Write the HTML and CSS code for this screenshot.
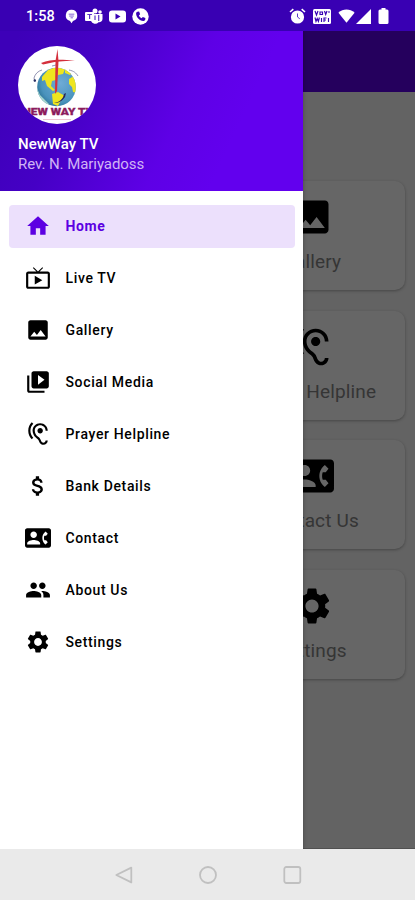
FILE: index.html
```html
<!DOCTYPE html>
<html lang="en">
<head>
<meta charset="utf-8">
<title>NewWay TV</title>
<link rel="stylesheet" href="styles.css">
</head>
<body>
<svg class="sprite" width="0" height="0" aria-hidden="true">
  <symbol id="home" viewBox="0 0 24 24"><path d="M10 20v-6h4v6h5v-8h3L12 3 2 12h3v8z"/></symbol>
  <symbol id="live" viewBox="0 0 24 24"><path d="M21 6h-7.59l3.290-3.290L16 2l-4 4-4-4-.71.71L10.590 6H3c-1.100 0-2 .89-2 2v12c0 1.100.9 2 2 2h18c1.100 0 2-.9 2-2V8c0-1.110-.9-2-2-2zm0 14H3V8h18v12zM9 10v8l7-4z"/></symbol>
  <symbol id="image" viewBox="0 0 24 24"><path d="M21 19V5c0-1.1-.9-2-2-2H5c-1.1 0-2 .9-2 2v14c0 1.1.9 2 2 2h14c1.1 0 2-.9 2-2zM8.5 13.5l2.5 3.01L14.5 12l4.5 6H5l3.5-4.5z"/></symbol>
  <symbol id="library" viewBox="0 0 24 24"><path d="M4 6H2v14c0 1.1.9 2 2 2h14v-2H4V6zm16-4H8c-1.1 0-2 .9-2 2v12c0 1.1.9 2 2 2h12c1.1 0 2-.9 2-2V4c0-1.1-.9-2-2-2zm-8 12.5v-9l6 4.5-6 4.5z"/></symbol>
  <symbol id="hearing" viewBox="0 0 24 24"><path d="M17 20c-.29 0-.56-.06-.76-.15-.71-.37-1.21-.88-1.71-2.38-.51-1.56-1.47-2.29-2.39-3-.79-.61-1.61-1.24-2.32-2.53C9.29 10.98 9 9.93 9 9c0-2.8 2.2-5 5-5s5 2.2 5 5h2c0-3.93-3.07-7-7-7S7 5.07 7 9c0 1.26.38 2.65 1.07 3.9.91 1.65 1.98 2.48 2.85 3.15.81.62 1.39 1.07 1.71 2.05.6 1.82 1.37 2.84 2.73 3.55.51.23 1.07.35 1.64.35 2.21 0 4-1.79 4-4h-2c0 1.1-.9 2-2 2zM7.64 2.64L6.22 1.22C4.23 3.21 3 5.96 3 9s1.23 5.79 3.22 7.78l1.41-1.41C6.01 13.74 5 11.49 5 9s1.01-4.74 2.64-6.36zM11.5 9c0 1.38 1.12 2.5 2.5 2.5s2.5-1.12 2.5-2.5-1.12-2.5-2.5-2.5-2.5 1.12-2.5 2.5z"/></symbol>
  <symbol id="money" viewBox="0 0 24 24"><path d="M11.8 10.9c-2.27-.59-3-1.2-3-2.15 0-1.09 1.01-1.85 2.7-1.85 1.78 0 2.44.85 2.5 2.1h2.21c-.07-1.72-1.12-3.3-3.21-3.81V3h-3v2.16c-1.94.42-3.5 1.68-3.5 3.61 0 2.31 1.91 3.46 4.7 4.13 2.5.6 3 1.48 3 2.41 0 .69-.49 1.79-2.7 1.79-2.06 0-2.87-.92-2.98-2.1h-2.2c.12 2.19 1.76 3.42 3.68 3.83V21h3v-2.15c1.95-.37 3.5-1.5 3.5-3.55 0-2.84-2.43-3.81-4.7-4.4z"/></symbol>
  <symbol id="contact" viewBox="0 0 24 24"><path d="M22 3H2C.9 3 0 3.9 0 5v14c0 1.1.9 2 2 2h20c1.1 0 1.99-.9 1.99-2L24 5c0-1.1-.9-2-2-2zM8 6c1.66 0 3 1.34 3 3s-1.34 3-3 3-3-1.34-3-3 1.34-3 3-3zm6 12H2v-1c0-2 4-3.1 6-3.1s6 1.1 6 3.1v1zm3.85-4h1.64L21 16l-1.99 1.99c-1.31-.98-2.28-2.38-2.73-3.99-.18-.64-.28-1.31-.28-2s.1-1.36.28-2c.45-1.62 1.42-3.01 2.73-3.99L21 8l-1.51 2h-1.64c-.22.63-.35 1.3-.35 2s.13 1.37.35 2z"/></symbol>
  <symbol id="people" viewBox="0 0 24 24"><path d="M16 11c1.66 0 2.99-1.34 2.99-3S17.66 5 16 5c-1.66 0-3 1.34-3 3s1.34 3 3 3zm-8 0c1.66 0 2.99-1.34 2.99-3S9.66 5 8 5C6.34 5 5 6.34 5 8s1.34 3 3 3zm0 2c-2.33 0-7 1.17-7 3.5V19h14v-2.5c0-2.33-4.67-3.5-7-3.5zm8 0c-.29 0-.62.02-.97.05 1.16.84 1.97 1.97 1.97 3.45V19h6v-2.5c0-2.33-4.67-3.5-7-3.5z"/></symbol>
  <symbol id="settings" viewBox="0 0 24 24"><path d="M19.14 12.94c.04-.3.06-.61.06-.94 0-.32-.02-.64-.07-.94l2.03-1.58c.18-.14.23-.41.12-.61l-1.92-3.32c-.12-.22-.37-.29-.59-.22l-2.39.96c-.5-.38-1.03-.7-1.62-.94L14.4 2.81c-.04-.24-.24-.41-.48-.41h-3.84c-.24 0-.43.17-.47.41L9.25 5.35C8.66 5.59 8.12 5.92 7.63 6.29L5.24 5.33c-.22-.08-.47 0-.59.22L2.74 8.87c-.12.21-.08.47.12.61l2.03 1.58c-.05.3-.09.63-.09.94s.02.64.07.94l-2.03 1.58c-.18.14-.23.41-.12.61l1.92 3.32c.12.22.37.29.59.22l2.39-.96c.5.38 1.03.7 1.62.94l.36 2.54c.05.24.24.41.48.41h3.84c.24 0 .44-.17.47-.41l.36-2.54c.59-.24 1.13-.56 1.62-.94l2.39.96c.22.08.47 0 .59-.22l1.92-3.32c.12-.22.07-.47-.12-.61l-2.01-1.58zM12 15.6c-1.98 0-3.6-1.62-3.6-3.6s1.62-3.6 3.6-3.6 3.6 1.62 3.6 3.6-1.62 3.6-3.6 3.6z"/></symbol>
</svg>

<div class="phone">
  <header class="status">
    <span class="clock">1:58</span>
    <div class="status-left">
      <svg width="13" height="15" viewBox="0 0 14 16"><path fill="#fff" d="M7 .8a6.1 6.1 0 0 1 1.6 12L7 15.2l-1.6-2.4A6.1 6.1 0 0 1 7 .8z"/><path stroke="#7b5ad0" stroke-width="1" d="M4 5.500h6M4.500 7.500h5M6 9.400h2.500"/></svg>
      <svg width="18" height="16" viewBox="0 0 18 16"><g fill="#fff"><circle cx="10" cy="3" r="2.500"/><circle cx="15" cy="4" r="1.800"/><path d="M8 6h9.500v5a3.500 3.500 0 0 1-4 3.300A4.500 4.500 0 0 1 6 13z"/><rect y="4" width="9" height="9" rx="1"/></g><path fill="none" stroke="#5a35c4" stroke-width="1.200" d="M2.300 6.500h4.600M4.600 6.500V11M10 7.500V12M13.700 7v6"/></svg>
      <svg width="17" height="13" viewBox="0 0 17 13"><rect y=".5" width="17" height="12" rx="3" fill="#fff"/><path fill="#3700b3" d="M6.500 3.500v6l5-3z"/></svg>
      <svg width="17" height="17" viewBox="0 0 17 17"><circle cx="8.500" cy="8.500" r="8.200" fill="#fff"/><path fill="#3700b3" d="M5.500 3.800l1.600-.2 1 2.700-1.200 1.200c.6 1.300 1.400 2.100 2.700 2.700l1.200-1.200 2.600 1-.2 1.800c-.2.9-1 1.200-1.900 1.100-4-.5-7-3.500-7.200-7.200 0-1 .4-1.700 1.400-1.900z"/></svg>
    </div>
    <div class="status-right">
      <svg width="17" height="16" viewBox="0 0 17 16"><circle cx="8.500" cy="9" r="6.600" fill="#fff"/><path stroke="#fff" stroke-width="1.600" d="M1 4l3.300-2.900M16 4l-3.300-2.900"/><path fill="none" stroke="#5a38c8" d="M8.500 5.500V9l2.300 1.800"/></svg>
      <svg class="vowifi" width="18" height="15" viewBox="0 0 18 15"><rect width="18" height="15" rx="1.500" fill="#fff"/><g fill="none" stroke="#3700b3" stroke-width="1.150"><path d="M2 2l1.500 4L5 2M7 3h2.500v2.500H7zM11.500 2l1.200 3.500L14 2M15 3h2M2 8.500l1 4 1.200-3 1.200 3 1-4M8.500 9v4M11 13V9h2.500M11 11h2M15.500 9v4"/></g></svg>
      <svg class="wifi" width="17" height="14" viewBox="0 0 17 14"><path fill="#fff" d="M.4 3.700C5-.6 12-.6 16.600 3.700L8.500 13.800z"/></svg>
      <svg class="signal" width="15" height="15" viewBox="0 0 15 15"><path fill="#fff" d="M15 0v15H0z"/></svg>
      <svg width="11" height="16" viewBox="0 0 11 16"><path fill="#fff" d="M3.500 0h4v1.500H9A1.500 1.500 0 0 1 10.500 3v11.500A1.500 1.500 0 0 1 9 16H2A1.500 1.500 0 0 1 .5 14.500V3A1.500 1.500 0 0 1 2 1.500h1.500z"/></svg>
    </div>
  </header>

  <div class="app">
    <main class="page">
      <div class="toolbar"></div>
      <div class="cards">
        <section class="card"><svg class="card-icon"><use href="#image"/></svg><span>Gallery</span></section>
        <section class="card"><svg class="card-icon"><use href="#hearing"/></svg><span>Prayer Helpline</span></section>
        <section class="card"><svg class="card-icon"><use href="#contact"/></svg><span>Contact Us</span></section>
        <section class="card"><svg class="card-icon"><use href="#settings"/></svg><span>Settings</span></section>
      </div>
    </main>

    <aside class="drawer">
      <div class="profile">
        <svg class="avatar" viewBox="0 0 78 78">
          <defs>
            <clipPath id="disc"><circle cx="39" cy="39" r="39"/></clipPath>
            <clipPath id="world"><circle cx="38.500" cy="41" r="19.300"/></clipPath>
            <radialGradient id="sea" cx=".6" cy=".4" r=".7"><stop offset="0" stop-color="#6fabd6"/><stop offset=".7" stop-color="#4a93bd"/><stop offset="1" stop-color="#246b8c"/></radialGradient>
          </defs>
          <g clip-path="url(#disc)">
            <rect width="78" height="78" fill="#fff"/>
            <circle cx="38.500" cy="41" r="19.300" fill="url(#sea)"/>
            <g clip-path="url(#world)" fill="#eee51f">
              <path d="M24 31l6-7 8-3 9 2-2 5-5 1-2 5-4 1-1 5 4 4-2 1-6-5-2-6-3 1z"/>
              <path d="M47 23l7 4-2 2-5-2zM51 33l5-3 4 7-1 10-4-1-1-5-3-3z"/>
              <path d="M34 48l6-2 7 4-4 4-3 6-5-2z"/>
              <path d="M18 40l4 9 9 9-2 3-11-9z" fill="#a8d7cf"/>
            </g>
            <path d="M17 36l-1-4c1-4 4-7 8-8M34 20l4-1M51 24c5 1 7 3 9 6" fill="none" stroke="#7779a0" stroke-width=".8"/>
            <circle cx="16.800" cy="34.500" r="1.200" fill="#293064"/>
            <path d="M36 57c6-1 9-4 10-9l2-1-1 4c-3 4-6 6-11 6z" fill="#29285c"/>
            <path d="M39.500 3l1 12-1.500 30-2 3 .5-33z" fill="#d42f3c"/>
            <path d="M23 17c10-4 20-4 34-2-12-.5-20 .5-32 3.500z" fill="#d42f3c"/>
            <text x="40" y="68.500" text-anchor="middle" textLength="71" lengthAdjust="spacingAndGlyphs" class="logo-text">NEW WAY TV</text>
            <path d="M25 73.500h28" stroke="#eab5c8" stroke-width=".8"/>
          </g>
        </svg>
        <div class="name">NewWay TV</div>
        <div class="subtitle">Rev. N. Mariyadoss</div>
      </div>
      <nav class="menu">
        <a class="item active"><svg><use href="#home"/></svg><span>Home</span></a>
        <a class="item"><svg><use href="#live"/></svg><span>Live TV</span></a>
        <a class="item"><svg><use href="#image"/></svg><span>Gallery</span></a>
        <a class="item"><svg><use href="#library"/></svg><span>Social Media</span></a>
        <a class="item"><svg><use href="#hearing"/></svg><span>Prayer Helpline</span></a>
        <a class="item"><svg><use href="#money"/></svg><span>Bank Details</span></a>
        <a class="item"><svg><use href="#contact"/></svg><span>Contact</span></a>
        <a class="item"><svg><use href="#people"/></svg><span>About Us</span></a>
        <a class="item"><svg><use href="#settings"/></svg><span>Settings</span></a>
      </nav>
    </aside>
  </div>

  <footer class="navbar">
    <svg viewBox="0 0 20 20"><path d="M18.300 2.600v14.800L3.300 10z"/></svg>
    <svg viewBox="0 0 20 20"><circle cx="10" cy="10" r="8"/></svg>
    <svg viewBox="0 0 20 20"><rect x="2.300" y="2" width="16" height="16" rx="2"/></svg>
  </footer>
</div>
</body>
</html>
```
FILE: styles.css
```css
* { box-sizing: border-box; }
body { margin: 0; font-family: Roboto, "Liberation Sans", sans-serif; }
svg { display: block; flex: none; }
.sprite { position: absolute; }

.phone {
  width: 415px;
  height: 900px;
  display: flex;
  flex-direction: column;
  overflow: hidden;
}

.status {
  height: 31px;
  flex: none;
  display: flex;
  align-items: center;
  padding: 1px 26px 0;
  background: #3900b3;
  color: #fff;
}
.clock { width: 38.500px; font-size: 14.500px; font-weight: 500; letter-spacing: 0.1px; }
.status-left { display: flex; align-items: center; gap: 6px; }
.status-left svg:first-child { margin-right: 1px; }
.status-right { display: flex; align-items: center; margin-left: auto; }
.vowifi { margin-left: 7px; }
.wifi { margin-left: 7px; }
.signal { margin: 0 7px 0 1px; }

.app { position: relative; flex: 1; overflow: hidden; }

.page { height: 100%; background: #636363; border-bottom: 1px solid #505050; }
.toolbar { height: 61px; background: #25005d; }
.cards {
  display: grid;
  width: 187px;
  grid-auto-rows: 109px;
  gap: 20.700px;
  margin: 89px 10px 0 auto;
}
.card {
  display: flex;
  flex-direction: column;
  align-items: center;
  padding-top: 14px;
  border-radius: 10px;
  background: #666;
  box-shadow: 0 1px 3px rgba(0, 0, 0, 0.3);
  color: #353535;
  font-size: 19px;
  line-height: 24px;
  letter-spacing: 0.150px;
  white-space: nowrap;
}
.card-icon { width: 44px; height: 44px; margin-bottom: 11px; fill: #000; }

.drawer {
  position: absolute;
  top: 0;
  left: 0;
  width: 303px;
  height: 100%;
  background: #fff;
  box-shadow: 0 0 4px rgba(0, 0, 0, 0.3);
}
.profile {
  height: 159.500px;
  padding: 15px 18px 0;
  background: linear-gradient(115deg, #3d00b8 5%, #4500c5 28%, #5e00e6 58%, #6200ee 75%);
  color: #fff;
}
.avatar { width: 78px; height: 78px; }
.logo-text { font: 900 9px Roboto, sans-serif; fill: #8c1b5d; stroke: #8c1b5d; stroke-width: 0.3px; }
.name { margin-top: 10px; font-size: 15px; line-height: 20px; font-weight: 500; letter-spacing: 0; }
.subtitle { font-size: 15px; line-height: 20px; color: #d0b3f5; letter-spacing: -0.060px; }

.menu {
  display: grid;
  grid-auto-rows: 43.500px;
  gap: 8.450px;
  padding: 14px 8.500px 0 9px;
}
.item {
  display: flex;
  align-items: center;
  gap: 15px;
  padding-left: 15.500px;
  border-radius: 4px;
  color: #000;
  font-size: 14px;
  font-weight: 500;
  letter-spacing: 0.640px;
}
.item svg { width: 26px; height: 26px; fill: currentColor; }
.active { background: #ece0fc; color: #5c00e2; font-weight: 700; }

.navbar {
  height: 51px;
  flex: none;
  display: flex;
  justify-content: center;
  align-items: center;
  gap: 64.500px;
  background: #eaeaea;
}
.navbar svg { width: 20px; height: 20px; fill: none; stroke: #c0c0c0; stroke-width: 1.800; stroke-linejoin: round; }
```
